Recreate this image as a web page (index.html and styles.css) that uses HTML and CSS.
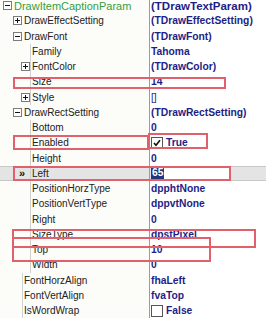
FILE: index.html
```html
<!DOCTYPE html>
<html lang="en">
<head>
  <meta charset="UTF-8">
  <title>Inspector</title>
  <link rel="stylesheet" href="styles.css">
</head>
<body>

<div class="inspector">
  <div class="rows">
    <div class="row root">
      <div class="name l0"><svg class="box" width="9" height="9"><rect x=".5" y=".5" width="8" height="8" fill="#fff" stroke="#7c7c7c"/><path d="M2 4.5h5" stroke="#111"/></svg><span class="green">DrawItemCaptionParam</span></div>
      <div class="val">(TDrawTextParam)</div>
    </div>
    <div class="row">
      <div class="name l1"><svg class="box" width="9" height="9"><rect x=".5" y=".5" width="8" height="8" fill="#fff" stroke="#7c7c7c"/><path d="M2 4.5h5M4.5 2v5" stroke="#111"/></svg><span>DrawEffectSetting</span></div>
      <div class="val">(TDrawEffectSetting)</div>
    </div>
    <div class="row">
      <div class="name l1"><svg class="box" width="9" height="9"><rect x=".5" y=".5" width="8" height="8" fill="#fff" stroke="#7c7c7c"/><path d="M2 4.5h5" stroke="#111"/></svg><span>DrawFont</span></div>
      <div class="val">(TDrawFont)</div>
    </div>
    <div class="row g2">
      <div class="name l2"><span class="sp"></span><span>Family</span></div>
      <div class="val">Tahoma</div>
    </div>
    <div class="row g2">
      <div class="name l2"><svg class="box" width="9" height="9"><rect x=".5" y=".5" width="8" height="8" fill="#fff" stroke="#7c7c7c"/><path d="M2 4.5h5M4.5 2v5" stroke="#111"/></svg><span>FontColor</span></div>
      <div class="val">(TDrawColor)</div>
    </div>
    <div class="row g2">
      <div class="name l2"><span class="sp"></span><span>Size</span></div>
      <div class="val">14</div>
    </div>
    <div class="row g2">
      <div class="name l2"><svg class="box" width="9" height="9"><rect x=".5" y=".5" width="8" height="8" fill="#fff" stroke="#7c7c7c"/><path d="M2 4.5h5M4.5 2v5" stroke="#111"/></svg><span>Style</span></div>
      <div class="val thin">[]</div>
    </div>
    <div class="row">
      <div class="name l1"><svg class="box" width="9" height="9"><rect x=".5" y=".5" width="8" height="8" fill="#fff" stroke="#7c7c7c"/><path d="M2 4.5h5" stroke="#111"/></svg><span>DrawRectSetting</span></div>
      <div class="val">(TDrawRectSetting)</div>
    </div>
    <div class="row g2">
      <div class="name l2"><span class="sp"></span><span>Bottom</span></div>
      <div class="val">0</div>
    </div>
    <div class="row g2">
      <div class="name l2"><span class="sp"></span><span>Enabled</span></div>
      <div class="val"><svg class="check" width="12" height="12"><rect x=".5" y=".5" width="11" height="11" fill="#fff" stroke="#555"/><path d="M3 6l2 2.2 4-5" fill="none" stroke="#111" stroke-width="1.6"/></svg>True</div>
    </div>
    <div class="row g2">
      <div class="name l2"><span class="sp"></span><span>Height</span></div>
      <div class="val">0</div>
    </div>
    <div class="row g2 sel">
      <div class="name lsel"><span class="mark">&raquo;</span><span>Left</span></div>
      <div class="val"><span class="edit"><span class="hl">65</span></span></div>
    </div>
    <div class="row g2">
      <div class="name l2"><span class="sp"></span><span>PositionHorzType</span></div>
      <div class="val">dpphtNone</div>
    </div>
    <div class="row g2">
      <div class="name l2"><span class="sp"></span><span>PositionVertType</span></div>
      <div class="val">dppvtNone</div>
    </div>
    <div class="row g2">
      <div class="name l2"><span class="sp"></span><span>Right</span></div>
      <div class="val">0</div>
    </div>
    <div class="row g2">
      <div class="name l2"><span class="sp"></span><span>SizeType</span></div>
      <div class="val">dpstPixel</div>
    </div>
    <div class="row g2">
      <div class="name l2"><span class="sp"></span><span>Top</span></div>
      <div class="val">10</div>
    </div>
    <div class="row g2">
      <div class="name l2"><span class="sp"></span><span>Width</span></div>
      <div class="val">0</div>
    </div>
    <div class="row g1">
      <div class="name l1"><span class="sp"></span><span>FontHorzAlign</span></div>
      <div class="val">fhaLeft</div>
    </div>
    <div class="row g1">
      <div class="name l1"><span class="sp"></span><span>FontVertAlign</span></div>
      <div class="val">fvaTop</div>
    </div>
    <div class="row g1">
      <div class="name l1"><span class="sp"></span><span>IsWordWrap</span></div>
      <div class="val"><svg class="check" width="12" height="12"><rect x=".5" y=".5" width="11" height="11" fill="#fff" stroke="#555"/></svg>False</div>
    </div>
  </div>

  <!-- annotation frames drawn over the grid -->
  <div class="frame f-size"></div>
  <div class="frame f-en1"></div>
  <div class="frame f-en2"></div>
  <div class="frame f-left"></div>
  <div class="frame f-stype"></div>
  <div class="frame f-top"></div>
</div>

</body>
</html>
```

FILE: styles.css
```css
body {
  margin: 0;
  background: #fff;
  overflow: hidden;
  font-family: "Liberation Sans", Arial, sans-serif;
}
.inspector {
  position: relative;
  width: 266px;
  height: 319px;
  overflow: hidden;
}
.rows {
  display: flex;
  flex-direction: column;
  margin-top: -2px;
}
.row {
  display: flex;
  height: 15.25px;
  flex: none;
}
.name {
  width: 150px;
  box-sizing: border-box;
  border-right: 1px solid #9c9c9c;
  background-color: #fcfcf9;
  display: flex;
  align-items: center;
  gap: 2px;
  font-size: 10px;
  color: #222;
  white-space: nowrap;
}
.l0 { padding-left: 3px; }
.l1 { padding-left: 13px; }
.l2 { padding-left: 21px; }
.lsel { padding-left: 19px; }
.box { flex: none; }
.sp { width: 9px; flex: none; }
.green {
  color: #3a9e3a;
  font-size: 11px;
}
.g2 .name {
  background-image: linear-gradient(#cfcfcf, #cfcfcf);
  background-position: 30px 0;
  background-size: 1px 100%;
  background-repeat: no-repeat;
}
.g1 .name {
  background-image: linear-gradient(#cfcfcf, #cfcfcf);
  background-position: 22px 0;
  background-size: 1px 100%;
  background-repeat: no-repeat;
}
.val {
  flex: 1;
  display: flex;
  align-items: center;
  gap: 3px;
  padding-left: 1px;
  font-size: 10.3px;
  font-weight: bold;
  color: #1e1e86;
  white-space: nowrap;
}
.root .val { font-size: 11.5px; }
.thin { font-weight: normal; }
.check { flex: none; }
.sel .name,
.sel .val {
  background-color: #e4e4e4;
  box-shadow: inset 0 1px #c8c8c8, inset 0 -1px #c8c8c8;
}
.mark {
  width: 11px;
  font-weight: bold;
  font-size: 11px;
  color: #111;
}
.edit {
  width: 80px;
  height: 13px;
  background: #fff;
  display: flex;
  align-items: center;
}
.hl {
  background: #23357a;
  color: #fff;
  padding: 0 1px;
  line-height: 12px;
}
.frame {
  position: absolute;
  box-sizing: border-box;
  border: 2px solid #e0606c;
}
.f-size { left: 13px; top: 77px; width: 213px; height: 12px; }
.f-en1 { left: 13px; top: 135px; width: 136px; height: 15px; }
.f-en2 { left: 148px; top: 133px; width: 60px; height: 16px; }
.f-left { left: 13px; top: 166px; width: 218px; height: 15px; }
.f-stype { left: 12px; top: 229px; width: 244px; height: 19px; }
.f-top { left: 12px; top: 237px; width: 199px; height: 25px; }
```
